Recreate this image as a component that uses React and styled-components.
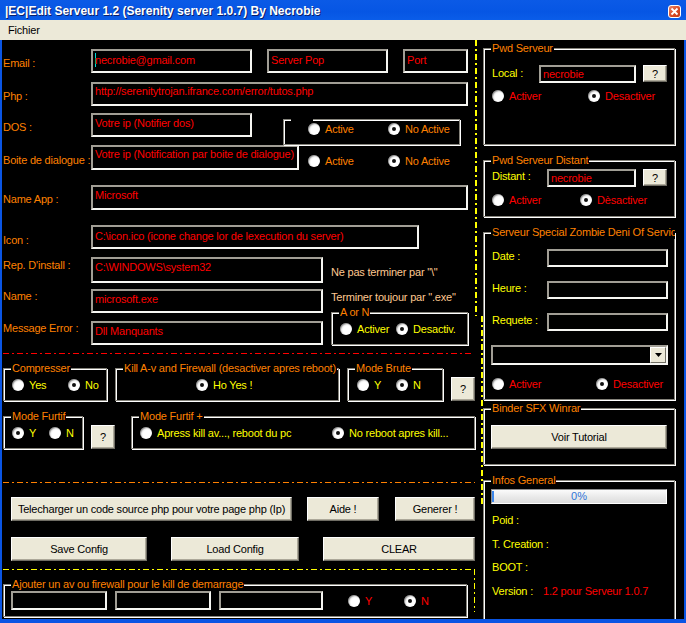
import React from 'react';
import styled, { createGlobalStyle, css } from 'styled-components';

const ORANGE = '#ff8000';
const YELLOW = '#ffff00';
const RED = '#ff0000';
const PEACH = '#ffc890';

const GlobalStyle = createGlobalStyle`
  html, body {
    margin: 0;
    padding: 0;
    background: #fff;
  }
`;

const Window = styled.div`
  width: 686px;
  height: 623px;
  display: flex;
  flex-direction: column;
  overflow: hidden;
  background: #0a55e4;
  font-family: "Liberation Sans", Arial, sans-serif;
  font-size: 11px;
  letter-spacing: -0.2px;
`;

const TitleBar = styled.div`
  height: 20px;
  flex: none;
  box-sizing: border-box;
  display: flex;
  align-items: center;
  justify-content: space-between;
  padding: 2px 5px 0 5px;
  background: linear-gradient(to bottom, #0b5ae6 0%, #0656e4 60%, #0a5de9 100%);
`;

const TitleText = styled.span`
  color: #fff;
  font-weight: bold;
  font-size: 12px;
  letter-spacing: 0;
  text-shadow: 1px 1px 0 #0a1f6a;
  white-space: nowrap;
`;

const CloseBtn = styled.span`
  width: 13px;
  height: 13px;
  box-sizing: border-box;
  border: 1px solid #fff;
  border-radius: 3px;
  background: linear-gradient(135deg, #e9866a 0%, #d84b26 55%, #c23a16 100%);
  display: flex;
  align-items: center;
  justify-content: center;
`;

const MenuBar = styled.div`
  height: 20px;
  flex: none;
  background: #ece9d8;
  padding-left: 8px;
  line-height: 20px;
  color: #000;
`;

const Client = styled.div`
  flex: 1;
  min-height: 0;
  display: flex;
  margin: 0 2px 4px;
  background: #000;
  overflow: hidden;
`;

const LeftPane = styled.div`
  width: 473px;
  flex: none;
  box-sizing: border-box;
  padding: 9px 0 0 1px;
  display: flex;
  flex-direction: column;
`;

const RightPane = styled.div`
  width: 201px;
  flex: none;
  box-sizing: border-box;
  padding-top: 8px;
  display: flex;
  flex-direction: column;
`;

const DividerCol = styled.div`
  width: 8px;
  flex: none;
  display: flex;
  flex-direction: column;
`;

const dashes = (c, dir) =>
  `repeating-linear-gradient(${dir}, ${c} 0 6px, transparent 6px 9px, ${c} 9px 11px, transparent 11px 14px)`;

const VDash = styled.div`
  width: 2px;
  height: ${(p) => p.$h}px;
  margin-left: ${(p) => p.$ml || 0}px;
  flex: none;
  background: ${(p) => dashes(p.$c, 'to bottom')};
`;

const HDash = styled.div`
  width: ${(p) => p.$w}px;
  height: 1px;
  flex: none;
  margin-top: ${(p) => p.$mt || 0}px;
  background: ${(p) => dashes(p.$c, 'to right')};
`;

const Row = styled.div`
  display: flex;
  align-items: ${(p) => p.$align || 'flex-start'};
  flex: none;
  height: ${(p) => p.$h}px;
  margin-top: ${(p) => p.$mt || 0}px;
  margin-left: ${(p) => p.$ml || 0}px;
`;

const Column = styled.div`
  display: flex;
  flex-direction: column;
  align-items: flex-start;
  flex: none;
  margin-left: ${(p) => p.$ml || 0}px;
`;

const FieldLabel = styled.span`
  width: ${(p) => p.$w || 88}px;
  flex: none;
  margin-top: ${(p) => p.$off || 0}px;
  color: ${(p) => p.$color || ORANGE};
  line-height: 14px;
  white-space: nowrap;
`;

const Hint = styled.span`
  margin-top: ${(p) => p.$mt || 0}px;
  color: ${PEACH};
  line-height: 14px;
  white-space: nowrap;
`;

const InfoLine = styled.div`
  margin-top: ${(p) => p.$mt || 0}px;
  color: ${YELLOW};
  line-height: 14px;
  white-space: nowrap;
  display: flex;
`;

const InfoValue = styled.span`
  color: ${RED};
  margin-left: 10px;
`;

const TextBox = styled.div`
  width: ${(p) => p.$w}px;
  height: ${(p) => p.$h || 24}px;
  flex: none;
  box-sizing: border-box;
  margin-left: ${(p) => p.$ml || 0}px;
  border: 2px solid;
  border-color: #a19e95 #f6f6f2 #f6f6f2 #a19e95;
  background: #000;
  color: ${RED};
  padding: ${(p) => p.$pt ?? 1}px 0 0 2px;
  line-height: 14px;
  white-space: nowrap;
  overflow: hidden;
`;

const Caret = styled.span`
  display: inline-block;
  width: 1px;
  height: 14px;
  vertical-align: top;
  background: #00d8d8;
  margin-right: -1px;
`;

const Combo = styled(TextBox)`
  display: flex;
  justify-content: flex-end;
  align-items: stretch;
  padding: 0;
`;

const DropBtn = styled.span`
  width: 16px;
  box-sizing: border-box;
  background: #ece9d8;
  border: 1px solid;
  border-color: #fff #716f64 #716f64 #fff;
  display: flex;
  align-items: center;
  justify-content: center;
`;

const Button = styled.button`
  width: ${(p) => p.$w}px;
  height: ${(p) => p.$h || 24}px;
  flex: none;
  box-sizing: border-box;
  margin: ${(p) => p.$mt || 0}px 0 0 ${(p) => p.$ml || 0}px;
  padding: 0;
  background: #ece9d8;
  border: 1px solid;
  border-color: #fff #6f6d64 #6f6d64 #fff;
  box-shadow: inset -1px -1px 0 #aca899;
  font-family: inherit;
  font-size: 11px;
  letter-spacing: -0.2px;
  color: #000;
  white-space: nowrap;
`;

const Group = styled.div`
  position: relative;
  flex: none;
  box-sizing: border-box;
  width: ${(p) => p.$w}px;
  height: ${(p) => p.$h}px;
  margin-top: ${(p) => p.$mt || 0}px;
  margin-left: ${(p) => p.$ml || 0}px;
  padding: ${(p) => p.$pt || 0}px 0 0 ${(p) => p.$pl || 0}px;
  border: 1px solid #85837b;
  box-shadow: inset 1px 1px 0 #fff, 1px 1px 0 #fff;
  display: flex;
  ${(p) =>
    p.$col
      ? css`
          flex-direction: column;
          align-items: flex-start;
        `
      : css`
          align-items: ${p.$align || 'center'};
        `}
`;

const Legend = styled.span`
  position: absolute;
  top: -8px;
  left: 7px;
  padding: 0 1px;
  background: #000;
  color: ${ORANGE};
  line-height: 14px;
  height: 14px;
  white-space: nowrap;
  overflow: hidden;
  width: ${(p) => (p.$w ? `${p.$w}px` : 'auto')};
  max-width: ${(p) => (p.$max ? `${p.$max}px` : 'none')};
`;

const RadioItem = styled.span`
  display: flex;
  align-items: center;
  gap: 5px;
  flex: none;
  width: ${(p) => (p.$w ? `${p.$w}px` : 'auto')};
  color: ${(p) => p.$color};
  line-height: 14px;
  white-space: nowrap;
`;

const RadioDot = styled.span`
  position: relative;
  width: 12px;
  height: 12px;
  flex: none;
  border-radius: 50%;
  background: radial-gradient(circle at 62% 62%, #fff 40%, #e4e4e4 70%, #a9a9a9 100%);
  box-shadow: inset 1px 1px 1px rgba(0, 0, 0, 0.35);
  ${(p) =>
    p.$on &&
    css`
      &::after {
        content: '';
        position: absolute;
        left: 4px;
        top: 4px;
        width: 4px;
        height: 4px;
        border-radius: 50%;
        background: #111;
      }
    `}
`;

const Progress = styled.div`
  position: relative;
  width: 176px;
  height: 15px;
  margin: 8px 0 0 -1px;
  box-sizing: border-box;
  border: 1px solid;
  border-color: #8d8d8d #fff #fff #8d8d8d;
  background: linear-gradient(to bottom, #fbfbfb 0%, #ececec 45%, #dcdcdc 100%);
  color: #2f74d8;
  text-align: center;
  line-height: 13px;
  letter-spacing: 0;
`;

const ProgressTick = styled.span`
  position: absolute;
  left: 0;
  top: 1px;
  bottom: 1px;
  width: 2px;
  background: #3c86ea;
`;

const BottomZone = styled.div`
  flex: none;
  width: 472px;
  height: 50px;
  margin-top: 8px;
  box-sizing: border-box;
  padding-top: 15px;
  background-image: ${dashes(YELLOW, 'to right')}, ${dashes(YELLOW, 'to bottom')};
  background-size: 100% 1px, 1px 43px;
  background-position: 0 0, 471px 0;
  background-repeat: no-repeat;
`;

const Radio = ({ on, color, w, children }) => (
  <RadioItem $color={color} $w={w}>
    <RadioDot $on={on} />
    {children}
  </RadioItem>
);

const App = () => (
  <>
    <GlobalStyle />
    <Window>
      <TitleBar>
        <TitleText>|EC|Edit Serveur 1.2 (Serenity server 1.0.7) By Necrobie</TitleText>
        <CloseBtn>
          <svg width="9" height="9" viewBox="0 0 9 9">
            <path d="M1.5 1.5 L7.5 7.5 M7.5 1.5 L1.5 7.5" stroke="#fff" strokeWidth="1.8" />
          </svg>
        </CloseBtn>
      </TitleBar>
      <MenuBar>Fichier</MenuBar>

      <Client>
        <LeftPane>
          <Row $h={24}>
            <FieldLabel $off={7}>Email :</FieldLabel>
            <TextBox $w={161} $pt={2}>
              <Caret />
              necrobie@gmail.com
            </TextBox>
            <TextBox $w={121} $ml={15} $pt={2}>
              Server Pop
            </TextBox>
            <TextBox $w={65} $ml={15} $pt={2}>
              Port
            </TextBox>
          </Row>

          <Row $h={24} $mt={9}>
            <FieldLabel $off={7}>Php :</FieldLabel>
            <TextBox $w={377} $pt={0}>
              http://serenitytrojan.ifrance.com/error/tutos.php
            </TextBox>
          </Row>

          <Row $h={24} $mt={7}>
            <FieldLabel $off={7}>DOS :</FieldLabel>
            <TextBox $w={161}>Votre ip (Notifier dos)</TextBox>
            <Group $w={177} $h={26} $mt={6} $ml={31} $pl={24} $pt={2} $align="flex-start">
              <Legend $w={20} />
              <Radio color={ORANGE} w={80}>
                Active
              </Radio>
              <Radio color={ORANGE} on>
                No Active
              </Radio>
            </Group>
          </Row>

          <Row $h={25} $mt={8}>
            <FieldLabel $off={8}>Boite de dialogue :</FieldLabel>
            <TextBox $w={208} $h={25} $pt={0}>
              Votre ip (Notification par boite de dialogue)
            </TextBox>
            <Row $h={12} $mt={10} $ml={9} $align="center">
              <Radio color={ORANGE} w={80}>
                Active
              </Radio>
              <Radio color={ORANGE} on>
                No Active
              </Radio>
            </Row>
          </Row>

          <Row $h={25} $mt={15}>
            <FieldLabel $off={7}>Name App :</FieldLabel>
            <TextBox $w={377} $h={25}>
              Microsoft
            </TextBox>
          </Row>

          <Row $h={24} $mt={15}>
            <FieldLabel $off={8}>Icon :</FieldLabel>
            <TextBox $w={328} $pt={2}>
              {'C:\\icon.ico (icone change lor de lexecution du server)'}
            </TextBox>
          </Row>

          <Row $h={88} $mt={8}>
            <Column>
              <Row $h={26}>
                <FieldLabel $off={1}>Rep. D'install :</FieldLabel>
                <TextBox $w={232} $h={26}>
                  {'C:\\WINDOWS\\system32'}
                </TextBox>
              </Row>
              <Row $h={24} $mt={6}>
                <FieldLabel>Name :</FieldLabel>
                <TextBox $w={232}>microsoft.exe</TextBox>
              </Row>
              <Row $h={24} $mt={8}>
                <FieldLabel>Message Error :</FieldLabel>
                <TextBox $w={232}>Dll Manquants</TextBox>
              </Row>
            </Column>
            <Column $ml={8}>
              <Hint $mt={8}>{'Ne pas terminer par "\\"'}</Hint>
              <Hint $mt={11}>Terminer toujour par ".exe"</Hint>
              <Group $w={137} $h={33} $mt={8} $pl={8}>
                <Legend>A or N</Legend>
                <Radio color={YELLOW} w={56}>
                  Activer
                </Radio>
                <Radio color={YELLOW} on>
                  Desactiv.
                </Radio>
              </Group>
            </Column>
          </Row>

          <HDash $c={RED} $w={468} $mt={8} />

          <Row $h={33} $mt={14}>
            <Group $w={104} $h={33} $pl={8}>
              <Legend>Compresser</Legend>
              <Radio color={YELLOW} w={56}>
                Yes
              </Radio>
              <Radio color={YELLOW} on>
                No
              </Radio>
            </Group>
            <Group $w={224} $h={33} $ml={8} $pl={80}>
              <Legend>Kill A-v and Firewall (desactiver apres reboot)</Legend>
              <Radio color={YELLOW} on>
                Ho Yes !
              </Radio>
            </Group>
            <Group $w={96} $h={33} $ml={8} $pl={9}>
              <Legend>Mode Brute</Legend>
              <Radio color={YELLOW} w={39}>
                Y
              </Radio>
              <Radio color={YELLOW} on>
                N
              </Radio>
            </Group>
            <Button $w={24} $ml={8} $mt={9}>
              ?
            </Button>
          </Row>

          <Row $h={33} $mt={15}>
            <Group $w={80} $h={33} $pl={8}>
              <Legend>Mode Furtif</Legend>
              <Radio color={YELLOW} w={37} on>
                Y
              </Radio>
              <Radio color={YELLOW}>N</Radio>
            </Group>
            <Button $w={24} $ml={8} $mt={9}>
              ?
            </Button>
            <Group $w={344} $h={33} $ml={16} $pl={8}>
              <Legend>Mode Furtif +</Legend>
              <Radio color={YELLOW} w={192}>
                Apress kill av..., reboot du pc
              </Radio>
              <Radio color={YELLOW} on>
                No reboot apres kill...
              </Radio>
            </Group>
          </Row>

          <HDash $c={ORANGE} $w={472} $mt={33} />

          <Row $h={24} $mt={14} $ml={8}>
            <Button $w={281}>Telecharger un code source php pour votre page php (Ip)</Button>
            <Button $w={72} $ml={15}>
              Aide !
            </Button>
            <Button $w={80} $ml={16}>
              Generer !
            </Button>
          </Row>

          <Row $h={24} $mt={16} $ml={8}>
            <Button $w={136}>Save Config</Button>
            <Button $w={128} $ml={24}>
              Load Config
            </Button>
            <Button $w={152} $ml={24}>
              CLEAR
            </Button>
          </Row>

          <BottomZone>
            <Group $w={464} $h={33} $pl={7}>
              <Legend>Ajouter un av ou firewall pour le kill de demarrage</Legend>
              <TextBox $w={96} $h={19} />
              <TextBox $w={96} $h={19} $ml={8} />
              <TextBox $w={104} $h={19} $ml={8} />
              <Row $h={12} $ml={25} $align="center">
                <Radio color={RED} w={56}>
                  Y
                </Radio>
                <Radio color={RED} on>
                  N
                </Radio>
              </Row>
            </Group>
          </BottomZone>
        </LeftPane>

        <DividerCol>
          <VDash $c={YELLOW} $h={276} />
          <VDash $c={YELLOW} $h={189} $ml={6} />
        </DividerCol>

        <RightPane>
          <Group $w={192} $h={97} $col $pl={8}>
            <Legend>Pwd Serveur</Legend>
            <Row $h={18} $mt={16}>
              <FieldLabel $w={47} $color={YELLOW} $off={1}>
                Local :
              </FieldLabel>
              <TextBox $w={97} $h={18} $pt={0}>
                necrobie
              </TextBox>
              <Button $w={24} $h={17} $ml={7}>
                ?
              </Button>
            </Row>
            <Row $h={12} $mt={7} $align="center">
              <Radio color={RED} w={96}>
                Activer
              </Radio>
              <Radio color={RED} on>
                Desactiver
              </Radio>
            </Row>
          </Group>

          <Group $w={192} $h={57} $mt={15} $col $pl={8}>
            <Legend>Pwd Serveur Distant</Legend>
            <Row $h={18} $mt={8}>
              <FieldLabel $w={55} $color={YELLOW}>
                Distant :
              </FieldLabel>
              <TextBox $w={89} $h={18} $pt={0}>
                necrobie
              </TextBox>
              <Button $w={24} $h={17} $ml={7}>
                ?
              </Button>
            </Row>
            <Row $h={12} $mt={7} $align="center">
              <Radio color={RED} w={88}>
                Activer
              </Radio>
              <Radio color={RED} on>
                Dèsactiver
              </Radio>
            </Row>
          </Group>

          <Group $w={192} $h={168} $mt={15} $col $pl={8}>
            <Legend $max={182}>Serveur Special Zombie Deni Of Service</Legend>
            <Row $h={18} $mt={16}>
              <FieldLabel $w={55} $color={YELLOW}>
                Date :
              </FieldLabel>
              <TextBox $w={121} $h={18} />
            </Row>
            <Row $h={18} $mt={14}>
              <FieldLabel $w={55} $color={YELLOW}>
                Heure :
              </FieldLabel>
              <TextBox $w={121} $h={18} />
            </Row>
            <Row $h={18} $mt={14}>
              <FieldLabel $w={55} $color={YELLOW}>
                Requete :
              </FieldLabel>
              <TextBox $w={121} $h={18} />
            </Row>
            <Row $h={20} $mt={14} $ml={-1}>
              <Combo $w={177} $h={20}>
                <DropBtn>
                  <svg width="7" height="4" viewBox="0 0 7 4">
                    <path d="M0 0 H7 L3.5 4 Z" fill="#000" />
                  </svg>
                </DropBtn>
              </Combo>
            </Row>
            <Row $h={12} $mt={13} $align="center">
              <Radio color={RED} w={104}>
                Activer
              </Radio>
              <Radio color={RED} on>
                Desactiver
              </Radio>
            </Row>
          </Group>

          <Group $w={192} $h={57} $mt={8} $col $pl={8}>
            <Legend>Binder SFX Winrar</Legend>
            <Button $w={176} $mt={16} $ml={-1}>
              Voir Tutorial
            </Button>
          </Group>

          <Group $w={192} $h={160} $mt={15} $col $pl={8}>
            <Legend>Infos General</Legend>
            <Progress>
              <ProgressTick />
              0%
            </Progress>
            <InfoLine $mt={9}>Poid :</InfoLine>
            <InfoLine $mt={10}>T. Creation :</InfoLine>
            <InfoLine $mt={9}>BOOT :</InfoLine>
            <InfoLine $mt={10}>
              Version :<InfoValue>1.2 pour Serveur 1.0.7</InfoValue>
            </InfoLine>
          </Group>
        </RightPane>
      </Client>
    </Window>
  </>
);

export default App;
